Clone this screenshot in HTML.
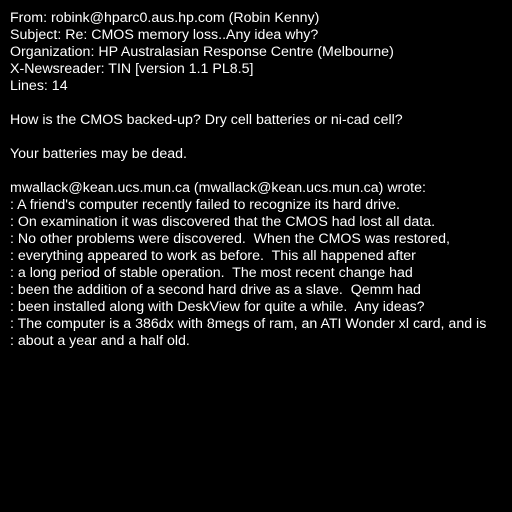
<!DOCTYPE html>
<html><head><style>
html,body{margin:0;background:#000;width:512px;height:512px;overflow:hidden}
pre{margin:0;padding:10px 0 0 10px;color:#fff;font-family:"Liberation Sans",sans-serif;font-size:14.2px;line-height:17px;white-space:pre}
</style></head><body><pre>From: robink@hparc0.aus.hp.com (Robin Kenny)
Subject: Re: CMOS memory loss..Any idea why?
Organization: HP Australasian Response Centre (Melbourne)
X-Newsreader: TIN [version 1.1 PL8.5]
Lines: 14

How is the CMOS backed-up? Dry cell batteries or ni-cad cell?

Your batteries may be dead.

mwallack@kean.ucs.mun.ca (mwallack@kean.ucs.mun.ca) wrote:
: A friend's computer recently failed to recognize its hard drive.
: On examination it was discovered that the CMOS had lost all data.
: No other problems were discovered.  When the CMOS was restored,
: everything appeared to work as before.  This all happened after
: a long period of stable operation.  The most recent change had
: been the addition of a second hard drive as a slave.  Qemm had
: been installed along with DeskView for quite a while.  Any ideas?
: The computer is a 386dx with 8megs of ram, an ATI Wonder xl card, and is
: about a year and a half old.</pre></body></html>
